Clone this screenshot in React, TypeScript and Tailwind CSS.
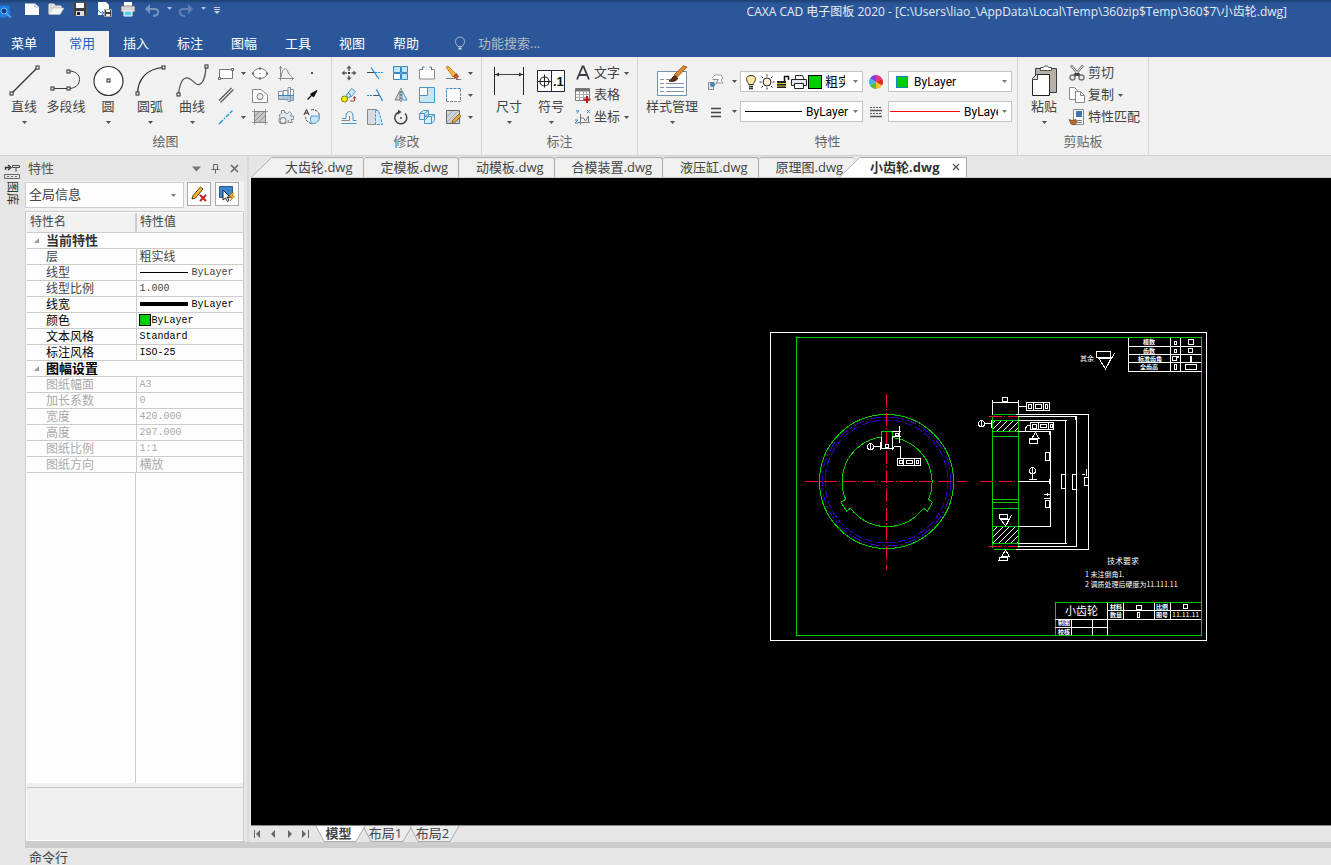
import { useState } from 'react';
import type { ReactNode } from 'react';
import clsx from 'clsx';

type IconProps = { w?: number; h?: number; children: ReactNode };

const Icon = ({ w = 16, h = 16, children }: IconProps) => (
    <svg width={w} height={h} viewBox={`0 0 ${w} ${h}`} fill="none" stroke="#4d4d4d" className="shrink-0 overflow-visible" aria-hidden="true">
        {children}
    </svg>
);

const Caret = ({ color = '#505050' }: { color?: string }) => (
    <svg width="5" height="3" viewBox="0 0 5 3" className="shrink-0" aria-hidden="true"><path d="M0 0h5L2.5 3z" fill={color} /></svg>
);

/* ---------- ribbon icons ---------- */

const Node = ({ x, y }: { x: number; y: number }) => <rect x={x - 1.5} y={y - 1.5} width="3" height="3" fill="#fff" stroke="#222" />;

const LineIcon = () => <Icon w={32} h={32}><path d="M3.5 28.5l26-26" stroke="#3c3c46" strokeWidth="1.4" /><Node x={3.5} y={28.5} /><Node x={29.5} y={2.5} /></Icon>;
const PolylineIcon = () => (
    <Icon w={32} h={32}>
        <path d="M2.5 23.5h16c7 0 11-4 11-9s-4-8.5-11-8.5" stroke="#3c3c46" />
        <Node x={2.5} y={23.5} /><Node x={18.5} y={23.5} /><Node x={18.5} y={6.5} />
    </Icon>
);
const CircleIcon = () => <Icon w={32} h={32}><circle cx="16.5" cy="16" r="14.5" fill="#fff" stroke="#333" strokeWidth="1.2" /><Node x={16.5} y={15.5} /></Icon>;
const ArcIcon = () => <Icon w={32} h={32}><path d="M3.5 28.5C4 14 13 3.5 29.5 2.5" stroke="#222" strokeWidth="1.2" /><Node x={3.5} y={28.5} /><Node x={29.5} y={2.5} /></Icon>;
const CurveIcon = () => <Icon w={32} h={32}><path d="M2.5 29.5C4 16 8 10 14 14c5 3 7 8 11 4.5 4-3.5 4.5-10 5-17" stroke="#55555c" strokeWidth="1.2" /><Node x={2.5} y={29.5} /><Node x={30.5} y={1.5} /></Icon>;

const RectIcon = () => <Icon><path d="M1.5 4.5h13v9h-13z" fill="#fff" stroke="#777" /><path d="M.5 12.5h2v2h-2zM13.5 3.5h2v2h-2z" fill="#fff" stroke="#666" /></Icon>;
const ParallelIcon = () => <Icon><path d="M1 13.5L13.5 1M2.5 15.5L15.5 2.5" stroke="#555" strokeWidth="1.2" /></Icon>;
const CenterLineIcon = () => <Icon><path d="M1 15l4-4m1-1l1-1m1-1l3-3m1-1l2.5-2.5" stroke="#1c9ad8" strokeWidth="1.4" /></Icon>;
const EllipseIcon = () => <Icon><ellipse cx="8" cy="8.5" rx="7" ry="5" fill="#fff" stroke="#777" /><path d="M7 2.5h2v2H7zM7 12.5h2v2H7zM0 7.5h2v2H0zM14 7.5h2v2h-2zM7.5 8h1v1h-1z" fill="#666" stroke="none" /></Icon>;
const RegionIcon = () => <Icon><path d="M.5 2.5H9l6.5 5.5v7.5H.5z" fill="#fff" stroke="#888" /><circle cx="8" cy="9.5" r="3" fill="#f1f1f1" stroke="#777" /></Icon>;
const HatchIcon = () => <Icon><path d="M2.5 2.5h11v11h-11z" fill="#c4c6c8" stroke="#777" /><path d="M0 2.5h16M0 13.5h16M2.5 0v16M13.5 0v16M3 7l4-4M3 12l9-9M7 13l6-6" stroke="#888" strokeWidth=".8" /></Icon>;
const FormulaIcon = () => <Icon><path d="M2.5 1v14.5M.5 13.5H15M1 3.5l1.5-2L4 3.5M13.5 12l2 1.5-2 2M3 12C4.5 3 8 2 9.5 6c1.2 3 3 5 4 5" stroke="#888" /></Icon>;
const ShaftIcon = () => (
    <Icon>
        <path d="M.5 4.5H5v8H.5zM5 3.5h5v9H5zM10 .5h2.5v14H10zM12.5 2.5h3v11h-3z" fill="#fff" stroke="#86929e" />
        <path d="M1 9h4v3H1zM5.5 8.5h4v3.5h-4zM10.5 8.5h1.5v5.5h-1.5zM13 8.5h2v4.5h-2z" fill="#a9cdea" stroke="none" /><path d="M0 8.5h16" stroke="#3c84c6" />
    </Icon>
);
const GearIcon = () => <Icon><path d="M3.5 1.5h3v2l3 1 2-2 2 2-1 2.5h3v3.5h-2.5l1.5 3h-4v-2L8 14.5H2l-1.5-3 1.5-3L1 6l2.5-1.5z" fill="#dfe7ef" stroke="#8a8f96" /><circle cx="5" cy="11.5" r="3" fill="#f1f1f1" stroke="#777" /></Icon>;
const PointIcon = () => <Icon><path d="M7 7h2v2H7z" fill="#555" stroke="none" /></Icon>;
const ArrowIcon = () => <Icon><path d="M3.5 12.5l5-5" stroke="#111" strokeWidth="1.3" /><path d="M13 3.5L6.5 7l3 3z" fill="#111" stroke="#111" /></Icon>;
const FillIcon = () => <Icon><path d="M7 .8a7 7 0 11-5.5 7" strokeDasharray="3 1" /><path d="M7 7h8.5c0 6-4 8-8 7.5-1-2-1.5-5-.5-7.5z" fill="#bfe3f7" stroke="#5b9cc8" /><path d="M0 6L2.5.5 5 6M1 4h3" stroke="#222" /></Icon>;

const MoveIcon = () => <Icon><path d="M8 3v3M8 10.5v3M3 8h3M10.5 8h3" stroke="#55585c" strokeWidth="1.4" /><path d="M5.5 3.5L8 .5l2.5 3zM5.5 12.5l2.5 3 2.5-3zM3.5 5.5l-3 2.5 3 2.5zM12.5 5.5l3 2.5-3 2.5z" fill="#55585c" stroke="none" /><rect x="7" y="7" width="2" height="2" fill="#333" stroke="none" /></Icon>;
const TrimIcon = () => <Icon><path d="M0 7.5h8" stroke="#444" /><path d="M8 7.5h8" stroke="#2b87d8" strokeDasharray="2 1" /><path d="M4 2.5l8 11.5" stroke="#2b87d8" strokeWidth="1.3" /></Icon>;
const ArrayIcon = () => <Icon><path d="M.5 1.5h7v6h-7zM8.5 1.5h6v6h-6zM8.5 8.5h6v6h-6z" fill="#bfe6fa" stroke="#3c87c0" /><path d="M.5 8.5h7v6h-7z" fill="#fff" stroke="#3c87c0" /></Icon>;
const StretchIcon = () => <Icon><path d="M.5 4.5h15v9.5H.5z" fill="#fff" stroke="#888" /><path d="M4 4.5h8" stroke="#f1f1f1" /><path d="M3.5 5v-3h2M12.5 5v-3h-2" stroke="#3878b8" /></Icon>;
const EraseIcon = () => <Icon><path d="M1 2l2-1 8 8-3 3z" fill="#f5b63c" stroke="#b8741a" strokeWidth=".8" /><path d="M8.5 11.5l3-3 2 3-2 2.5z" fill="#c35a3c" stroke="#8a3b26" strokeWidth=".8" /><path d="M1 13.5h9M11 14.5h5" stroke="#777" /></Icon>;
const CopyMoveIcon = () => (
    <Icon>
        <circle cx="3.5" cy="12" r="3" fill="#fff000" stroke="#7a7a00" /><path d="M6 7.5l4.5-6 4 3-4.5 5.5z" fill="#cfeafb" stroke="#4a96c8" /><circle cx="7.5" cy="8.5" r="2" fill="#cfeafb" stroke="#4a96c8" />
        <path d="M9 14h4.5v-4M12 11.5l1.5-2 1.5 2" stroke="#a33" />
    </Icon>
);
const ExtendIcon = () => <Icon><path d="M0 8.5h7" stroke="#2b87d8" strokeDasharray="2 1" /><path d="M7 8.5h5" /><path d="M9.5 2.5l6 11.5" stroke="#2b87d8" strokeWidth="1.3" /></Icon>;
const MirrorIcon = () => <Icon><path d="M7 3.5v9.5H2z" fill="#d3d6da" stroke="#777" /><path d="M9 3.5v9.5h5z" fill="#cfeafb" stroke="#4a96c8" /><path d="M8 1v14" stroke="#555" strokeDasharray="2 1" /></Icon>;
const ScaleIcon = () => <Icon><path d="M.5.5h15v15H.5z" fill="#c4e7fa" stroke="#4a96c8" /><path d="M.5.5h8v8h-8z" fill="#fff" stroke="#4a96c8" /></Icon>;
const ExplodeIcon = () => <Icon><path d="M1.5 1.5h13v13h-13z" fill="#fff" stroke="none" /><path d="M1.5 14.5v-13h14" stroke="#3c87c0" strokeDasharray="3 1" /><path d="M15.5 2v12.5h-14" stroke="#888" strokeDasharray="3 1" /></Icon>;
const OffsetIcon = () => <Icon><path d="M.5 14.5h15M1 9.5h4V7c0-6 7-6 7 0v4.5h3.5" stroke="#4a96c8" /><path d="M.5 11.5h8V7" stroke="#888" /></Icon>;
const ChamferIcon = () => <Icon><path d="M.5.5h9v15h-9z" fill="#d8dade" stroke="#888" /><path d="M8.5 1.5h3l4 14H8.5z" fill="#cfeafb" stroke="#4a96c8" strokeDasharray="3 1" /></Icon>;
const RotateIcon = () => <Icon><path d="M5 3.5A6 6 0 1012 4.5" stroke="#3f4248" strokeWidth="1.5" /><path d="M5 .5l3.5 2.5L5 5.5z" fill="#3f4248" stroke="none" /><circle cx="8" cy="9" r="1" fill="#3f4248" stroke="none" /></Icon>;
const BlockIcon = () => <Icon><path d="M.5 4.5l4-3h5v6l-3 3h-6zM5.5 7.5l3-2h7v6l-2.5 3h-7.5z" fill="#d5edfb" stroke="#4a96c8" /><path d="M.5 4.5h5v6M5.5 4.5l4-3M5.5 7.5h7v7M12.5 7.5l3-2" stroke="#4a96c8" /></Icon>;
const EditHatchIcon = () => <Icon><path d="M1.5 1.5h13v13h-13z" fill="#d0d3d6" stroke="#666" /><path d="M2 8l6-6M2 13l11-11M5 14L14 5M10 14l4-4" stroke="#999" strokeWidth=".7" /><path d="M8 11l6-6 2 2-6 6-3 1z" fill="#f0a636" stroke="#8a5a1a" strokeWidth=".8" /></Icon>;

const DimensionIcon = () => (
    <Icon w={32} h={32}>
        <path d="M1.5 2v28M30.5 2v28" stroke="#23243a" /><path d="M2 9.5h28" stroke="#444" /><path d="M2 9.5l4-2v4zM30 9.5l-4-2v4z" fill="#333" stroke="none" />
    </Icon>
);
const SymbolIcon = () => (
    <Icon w={32} h={32}>
        <path d="M2.5 5.5h27v21h-27z" fill="#fff" stroke="#23243a" /><path d="M16.5 5.5v21" stroke="#23243a" />
        <circle cx="9.5" cy="16.5" r="4.5" stroke="#222" strokeWidth="1.2" /><path d="M3 16.5h13M9.5 9.5v13" stroke="#222" />
        <text x="18" y="21" fontSize="13" fontWeight="700" fontFamily="Liberation Sans, sans-serif" fill="#111" stroke="none">.1</text>
    </Icon>
);
const TextIcon = () => <Icon><path d="M2 14.5L7.5 1.5h1L14 14.5M4 10h8" stroke="#3a3d42" strokeWidth="1.8" /></Icon>;
const TableIcon = () => <Icon><path d="M.5 1.5h14v12H.5z" fill="#fff" stroke="#777" /><path d="M.5 1.5h14v3H.5z" fill="#777" stroke="none" /><path d="M.5 7.5h14M.5 10.5h14M4.5 4v9.5M8.5 4v9.5M11.5 4v9.5" stroke="#aaa" /><path d="M12 9v7M8.5 12.5h7" stroke="#b41c1c" strokeWidth="2" /></Icon>;
const CoordIcon = () => <Icon><path d="M5.5 5v10.5M3 13.5h12M5.5 9h3l2 3 3-5M13.5 7v7" stroke="#777" /><path d="M1 1l1.5 2M4 1L2 4.5M12 1l3 3M15 1l-3 3M0 11h3l-3 3h3" stroke="#3c87c0" /></Icon>;
const StyleIcon = () => (
    <Icon w={32} h={32}>
        <path d="M1.5 6.5h29v24h-29z" fill="#fff" stroke="#6f93b0" />
        <path d="M4 14.5h4M4 18.5h4M4 22.5h4M4 26.5h4M10 14.5h5M10 18.5h18M10 22.5h18M10 26.5h18" stroke="#7b93ab" />
        <path d="M18 10L27.5.8 31 2 21.5 12z" fill="#dd8a35" stroke="#8d4c12" strokeWidth=".8" />
        <path d="M13 16c3-1 3-5 6-5l2.5 2c0 3-5 4-8.5 3z" fill="#5b2f17" stroke="#3f1f0e" />
    </Icon>
);
const LayerIcon = () => <Icon><path d="M4 4l3-3h6l2 3-2 2 2 3H7" fill="#fff" stroke="#999" /><path d="M.5 8.5h5v7h-5zM4.5 5.5h6l-3 5" fill="#dfe5ea" stroke="#888" /><circle cx="4.5" cy="10.5" r="2.5" fill="#4a86b8" stroke="none" /></Icon>;
const LineStyleIcon = () => <Icon><path d="M3 4.5h10M3 8.5h10M3 12.5h10" stroke="#44464c" strokeWidth="1.3" /></Icon>;
const LineWeightIcon = () => <Icon w={14}><path d="M1 3.5h12M1 9.5h12" stroke="#555" strokeDasharray="2 1" /><path d="M1 6.5h12M1 12.5h12" stroke="#555" strokeWidth="1.5" /></Icon>;
const ColorWheel = () => (
    <Icon w={14} h={14}>
        <g stroke="none">
            <path d="M7 7V0a7 7 0 016 3.500z" fill="#e8308c" /><path d="M7 7l6-3.500a7 7 0 010 7z" fill="#e8271c" /><path d="M7 7l6 3.500A7 7 0 017 14z" fill="#f0c020" />
            <path d="M7 7v7a7 7 0 01-6-3.500z" fill="#58b947" /><path d="M7 7l-6 3.500a7 7 0 010-7z" fill="#36b8e8" /><path d="M7 7L1 3.500A7 7 0 017 0z" fill="#6a4ae0" />
        </g>
    </Icon>
);
const BulbIcon = () => <Icon w={14}><path d="M7 1.5c-6 0-5 5-2.5 8v1h5v-1C12 6.5 13 1.5 7 1.5z" fill="#ffe9a0" stroke="#333" /><path d="M5 12.5h4M5 14.5h4" stroke="#333" strokeWidth="1.5" /></Icon>;
const SunIcon = () => <Icon><circle cx="8" cy="8" r="4" fill="#fff6d8" stroke="#222" /><path d="M8 .5v2M8 13.5v2M.5 8h2M13.5 8h2M2.5 2.5l1.5 1.5M12 12l1.5 1.5M2.5 13.5L4 12M12 4l1.5-1.5" stroke="#222" /></Icon>;
const LockIcon = () => <Icon w={14}><path d="M8.5 7V2.5h4V6" stroke="#111" strokeWidth="1.5" /><path d="M1 7h9v7H1z" fill="#222" stroke="none" /><path d="M1 9.5h9M1 12h9" stroke="#cfc832" /></Icon>;
const PlotIcon = () => <Icon><path d="M4.5 5V1.5h7L13 5" fill="#fff" stroke="#222" /><path d="M.5 5.5h15v6H.5z" fill="#e4e8ec" stroke="#222" /><path d="M3.5 9.5h9v5h-9z" fill="#fff" stroke="#222" /></Icon>;

const PasteIcon = () => (
    <Icon w={32} h={32}>
        <path d="M7.5 3.5h21v24h-21z" fill="#b9b1a8" stroke="#3a3a44" /><path d="M12.5 5.5v-3h3l1-1.5h3l1 1.5h3v3z" fill="#fff" stroke="#555" />
        <path d="M4.5 13.5l4-4h13v21h-17z" fill="#fff" stroke="#222" /><path d="M4.5 14.5h5v-5" fill="#ddd" stroke="#444" />
    </Icon>
);
const CutIcon = () => <Icon><path d="M2 .5l9 10.5M14 .5L5 11" stroke="#666" strokeWidth="2.5" /><path d="M2.5 1l8 9.5M13.5 1L5.5 10.5" stroke="#fff" /><circle cx="3.5" cy="12.5" r="2.5" stroke="#777" strokeWidth="1.5" /><circle cx="12.5" cy="12.5" r="2.5" stroke="#777" strokeWidth="1.5" /><path d="M5.5 8h5v3h-5z" fill="#444" stroke="none" /></Icon>;
const DuplicateIcon = () => <Icon><path d="M.5.5h5l3 3v9h-8z" fill="#fff" stroke="#888" /><path d="M6.5 4.5h5l4 4v7h-9z" fill="#fff" stroke="#888" /><path d="M11.5 4.5v4h4" stroke="#888" /></Icon>;
const MatchIcon = () => <Icon><path d="M4.5.5h10v15h-10z" fill="#fff" stroke="#888" /><path d="M7 2h6v6H7z" fill="#3f76b0" stroke="none" /><path d="M8 11.5h5M8 13.5h5" stroke="#777" /><path d="M0 10.5l3 1 4-1 1 3-3 2.5-3-1z" fill="#b4692a" stroke="#7a3f12" strokeWidth=".7" /></Icon>;

/* ---------- ribbon building blocks ---------- */

type Tool = { label: string; icon: ReactNode; menu?: boolean };

const BigButton = ({ label, icon, menu = true, wide }: Tool & { wide?: boolean }) => (
    <button className={clsx('flex flex-col items-center pt-2', wide ? 'w-14' : 'w-[42px]')}>
        {icon}
        <span className="h-5 text-[13px] leading-[18px] whitespace-nowrap">{label}</span>
        {menu && <span className="pt-1"><Caret /></span>}
    </button>
);

const SmallButton = ({ label, icon, menu }: Tool) => (
    <div className="flex items-center">
        <button aria-label={label} className="flex h-[22px] w-[26px] items-center justify-center">{icon}</button>
        {menu && <button aria-label={`${label} 选项`} className="flex h-[22px] w-2 items-center justify-center"><Caret /></button>}
    </div>
);

const LabelButton = ({ label, icon, menu }: Tool) => (
    <button className="flex h-[22px] items-center gap-[3px] text-[13px] leading-5">
        {icon}
        <span className="pr-px pb-[2px]">{label}</span>
        {menu && <Caret />}
    </button>
);

const Group = ({ title, children, className, inset }: { title: string; children: ReactNode; className?: string; inset?: string }) => (
    <section aria-label={title} className={clsx('flex flex-col border-r border-[#d4d4d4]', className)}>
        <div className={clsx('flex h-[74px] items-start', inset)}>{children}</div>
        <h2 className="text-center text-[13px] leading-5 text-[#666]">{title}</h2>
    </section>
);

const drawBig: Tool[] = [
    { label: '直线', icon: <LineIcon /> },
    { label: '多段线', icon: <PolylineIcon />, menu: false },
    { label: '圆', icon: <CircleIcon /> },
    { label: '圆弧', icon: <ArcIcon /> },
    { label: '曲线', icon: <CurveIcon /> },
];

const drawSmall: Tool[][] = [
    [{ label: '矩形', icon: <RectIcon />, menu: true }, { label: '椭圆', icon: <EllipseIcon /> }, { label: '公式曲线', icon: <FormulaIcon /> }, { label: '点', icon: <PointIcon /> }],
    [{ label: '平行线', icon: <ParallelIcon /> }, { label: '局部放大', icon: <RegionIcon /> }, { label: '孔轴', icon: <ShaftIcon /> }, { label: '箭头', icon: <ArrowIcon /> }],
    [{ label: '中心线', icon: <CenterLineIcon />, menu: true }, { label: '剖面线', icon: <HatchIcon /> }, { label: '齿轮', icon: <GearIcon /> }, { label: '填充', icon: <FillIcon /> }],
];

const modifySmall: Tool[][] = [
    [{ label: '平移', icon: <MoveIcon /> }, { label: '裁剪', icon: <TrimIcon /> }, { label: '阵列', icon: <ArrayIcon /> }, { label: '拉伸', icon: <StretchIcon /> }, { label: '删除', icon: <EraseIcon />, menu: true }],
    [{ label: '平移复制', icon: <CopyMoveIcon /> }, { label: '延伸', icon: <ExtendIcon /> }, { label: '镜像', icon: <MirrorIcon /> }, { label: '缩放', icon: <ScaleIcon /> }, { label: '分解', icon: <ExplodeIcon />, menu: true }],
    [{ label: '等距线', icon: <OffsetIcon /> }, { label: '过渡', icon: <ChamferIcon /> }, { label: '旋转', icon: <RotateIcon /> }, { label: '块', icon: <BlockIcon /> }, { label: '编辑填充', icon: <EditHatchIcon />, menu: true }],
];

const comboBox = "flex h-[21px] items-center border border-[#c3c3c3] bg-white pr-1 font-['Roboto','Noto_Sans_CJK_SC',sans-serif] text-xs text-black";
const comboSelect = 'min-w-0 appearance-none overflow-hidden bg-transparent outline-none';

const Ribbon = () => (
    <div className="flex h-[99px] shrink-0 border-b border-[#d2d2d2] bg-[#f1f1f1] text-[#444]">
        <Group title="绘图" className="w-[332px]" inset="pl-[3px]">
            {drawBig.map(t => <BigButton key={t.label} {...t} />)}
            <div className="flex flex-col pt-[5px]">
                {drawSmall.map(([first, ...rest]) => (
                    <div key={first.label} className="flex">
                        <div className="w-[34px]"><SmallButton {...first} /></div>
                        {rest.map(t => <SmallButton key={t.label} {...t} />)}
                    </div>
                ))}
            </div>
        </Group>
        <Group title="修改" className="w-[150px]" inset="pl-1">
            <div className="flex flex-col pt-[5px]">
                {modifySmall.map(row => (
                    <div key={row[0].label} className="flex">
                        {row.map(t => <SmallButton key={t.label} {...t} />)}
                    </div>
                ))}
            </div>
        </Group>
        <Group title="标注" className="w-[156px]" inset="pl-[6px]">
            <BigButton label="尺寸" icon={<DimensionIcon />} />
            <BigButton label="符号" icon={<SymbolIcon />} />
            <div className="flex flex-col items-start pt-[5px] pl-[3px]">
                <LabelButton label="文字" icon={<TextIcon />} menu />
                <LabelButton label="表格" icon={<TableIcon />} />
                <LabelButton label="坐标" icon={<CoordIcon />} menu />
            </div>
        </Group>
        <Group title="特性" className="w-[380px]" inset="pl-[6px]">
            <BigButton label="样式管理" icon={<StyleIcon />} wide />
            <div className="grid grid-cols-[40px_123px_25px_124px] gap-y-[9px] pt-[14px]">
                <button aria-label="图层" className="flex items-center justify-between pr-[3px] pl-2"><LayerIcon /><Caret /></button>
                <div className={clsx(comboBox, 'gap-px pl-[3px]')}>
                    <BulbIcon /><SunIcon /><LockIcon /><PlotIcon />
                    <span className="mr-[2px] size-[14px] shrink-0 border border-black bg-[#00cc00]" />
                    <select aria-label="当前图层" className={clsx(comboSelect, 'w-5 shrink-0 text-[13px]')}><option>粗实线</option></select>
                    <span className="ml-auto"><Caret color="#777" /></span>
                </div>
                <button aria-label="颜色" className="flex items-center justify-center"><ColorWheel /></button>
                <div className={clsx(comboBox, 'gap-[6px] pl-[7px]')}>
                    <span className="size-3 shrink-0 border border-[#1b82c8] bg-[#00cc00]" />
                    <select aria-label="当前颜色" className={clsx(comboSelect, 'flex-1')}><option>ByLayer</option></select>
                    <Caret color="#777" />
                </div>
                <button aria-label="线型" className="flex items-center justify-between pr-[3px] pl-2"><LineStyleIcon /><Caret /></button>
                <div className={clsx(comboBox, 'gap-1 pl-1')}>
                    <span className="h-px flex-1 bg-black" />
                    <select aria-label="当前线型" className={clsx(comboSelect, 'w-[43px] shrink-0')}><option>ByLayer</option></select>
                    <Caret color="#777" />
                </div>
                <button aria-label="线宽" className="flex items-center justify-center"><LineWeightIcon /></button>
                <div className={clsx(comboBox, 'gap-1 pl-px')}>
                    <span className="h-px flex-1 bg-[#ff0000]" />
                    <select aria-label="当前线宽" className={clsx(comboSelect, 'w-[34px] shrink-0')}><option>ByLayer</option></select>
                    <Caret color="#777" />
                </div>
            </div>
        </Group>
        <Group title="剪贴板" className="w-[131px]" inset="pl-[5px]">
            <BigButton label="粘贴" icon={<PasteIcon />} />
            <div className="flex flex-col items-start pt-[5px] pl-1">
                <LabelButton label="剪切" icon={<CutIcon />} />
                <LabelButton label="复制" icon={<DuplicateIcon />} menu />
                <LabelButton label="特性匹配" icon={<MatchIcon />} />
            </div>
        </Group>
    </div>
);

/* ---------- title bar ---------- */

const quickAccess: Tool[] = [
    { label: '新建', icon: <Icon><path d="M1 2.500h10l4 3.500v8H1z" fill="#fff" stroke="none" /><path d="M11 2.500v3.500h4" stroke="#a8b8d0" /></Icon> },
    { label: '打开', icon: <Icon><path d="M1 13V3h5l1.500 2H13v2" fill="#d8d8d4" stroke="#eee" /><path d="M1 13.500L5 7h11l-4 6.500z" fill="#f5f5f0" stroke="#c0c0bc" strokeWidth=".6" /></Icon> },
    { label: '保存', icon: <Icon><path d="M1.500 1.500h13v13h-13z" fill="#3a3d42" stroke="#555" /><path d="M4 2h8v5H4z" fill="#f4f4f4" stroke="none" /><path d="M4 10h8v5H4z" fill="#ddd" stroke="none" /><path d="M5 11h3v3H5z" fill="#222" stroke="none" /></Icon> },
    { label: '另存为', icon: <Icon><path d="M2 1h8l3 3v10H2z" fill="#fff" stroke="none" /><path d="M2 9l3 3h3M6 10l2 2-2 2" stroke="#2980c0" /><path d="M8.500 8.500h7v7h-7z" fill="#3a3d42" stroke="#aaa" /><path d="M10 9h4v2h-4zM10 13h4v2h-4z" fill="#eee" stroke="none" /></Icon> },
    { label: '打印', icon: <Icon><path d="M4 1h8v4H4z" fill="#fff" stroke="none" /><path d="M1 5h14v6H1z" fill="#d5d5d5" stroke="#555" strokeWidth=".6" /><path d="M4 10h8v5H4z" fill="#5ccbe8" stroke="#fff" /></Icon> },
];

const TitleBar = () => (
    <div className="flex h-6 items-center">
        <div className="w-5 shrink-0">
            <svg width="13" height="16" viewBox="0 0 13 16" aria-hidden="true">
                <path d="M0 2l4-1 3 1 3-1-1 4 2 3-2 3-4 3-5-1z" fill="#1f7be0" /><circle cx="4" cy="7" r="3" fill="#0d3b86" stroke="#7fc0ff" /><path d="M6.500 9.500l4.500 4" stroke="#4fa4f4" strokeWidth="2" />
            </svg>
        </div>
        {quickAccess.map(t => (
            <button key={t.label} aria-label={t.label} className="flex h-6 w-6 shrink-0 items-start justify-center pt-px">{t.icon}</button>
        ))}
        <button aria-label="撤销" className="flex w-6 justify-center pb-1"><Icon><path d="M4 7h7c5 0 4 7-2 7" stroke="#7792bf" strokeWidth="2" /><path d="M6 2v10L1 7z" fill="#7792bf" stroke="none" /></Icon></button>
        <button aria-label="撤销列表" className="flex w-[10px] justify-center pb-2"><Caret color="#b4c0d8" /></button>
        <button aria-label="重做" className="flex w-6 justify-center pb-1"><Icon><path d="M12 7H5c-5 0-4 7 2 7" stroke="#5f7fb4" strokeWidth="2" /><path d="M10 2v10l5-5z" fill="#5f7fb4" stroke="none" /></Icon></button>
        <button aria-label="重做列表" className="flex w-[10px] justify-center pb-2"><Caret color="#b4c0d8" /></button>
        <button aria-label="自定义快速访问" className="flex w-[18px] justify-center pb-1"><Icon w={6} h={8}><path d="M0 1.500h6M0 3.500h6" stroke="#c8d2e4" /><path d="M0 5h6L3 8z" fill="#c8d2e4" stroke="none" /></Icon></button>
        <h1 className="mr-11 ml-auto truncate text-xs leading-[22px] text-[#e6ecf5]">
            CAXA CAD 电子图板 2020 - [C:\Users\liao_\AppData\Local\Temp\360zip$Temp\360$7\小齿轮.dwg]
        </h1>
    </div>
);

const menuTabs = ['常用', '插入', '标注', '图幅', '工具', '视图', '帮助'];

const MenuBar = () => {
    const [active, setActive] = useState('常用');

    return (
        <nav className="mt-[7px] flex h-[26px] items-stretch text-[13px] leading-5 text-white">
            <button className="w-[55px] pr-[7px] pb-[2px]">菜单</button>
            {menuTabs.map(tab => (
                <button
                    key={tab}
                    onClick={() => setActive(tab)}
                    className={clsx('w-[54px] pb-[2px]', tab === active && 'bg-[#f1f1f1] text-[#1e62b4]')}
                >
                    {tab}
                </button>
            ))}
            <label className="flex items-center gap-3 pb-[2px] pl-[21px]">
                <Icon w={12} h={14}><path d="M4 10.500C2 8 1.500 7.500 1.500 5.500a4.500 4.500 0 019 0c0 2-.5 2.500-2.500 5z" stroke="#a9b7ce" /><path d="M4.500 12.500h3" stroke="#d0d8e4" strokeWidth="2" /></Icon>
                <input aria-label="功能搜索" placeholder="功能搜索..." className="w-40 bg-transparent outline-none placeholder:text-[#b3bac4]" />
            </label>
        </nav>
    );
};

/* ---------- property panel ---------- */

type Prop = { name: string; value: ReactNode; cjk?: boolean };

const currentProps: Prop[] = [
    { name: '层', value: '粗实线', cjk: true },
    { name: '线型', value: <><span className="mr-1 h-px w-12 bg-black" />ByLayer</> },
    { name: '线型比例', value: '1.000' },
];

const currentPropsBlack: Prop[] = [
    { name: '线宽', value: <><span className="mr-1 h-1 w-12 bg-black" />ByLayer</> },
    { name: '颜色', value: <><span className="-ml-px mr-px size-3 border border-black bg-[#00cc00]" />ByLayer</> },
    { name: '文本风格', value: 'Standard' },
    { name: '标注风格', value: 'ISO-25' },
];

const sheetProps: Prop[] = [
    { name: '图纸幅面', value: 'A3' },
    { name: '加长系数', value: '0' },
    { name: '宽度', value: '420.000' },
    { name: '高度', value: '297.000' },
    { name: '图纸比例', value: '1:1' },
    { name: '图纸方向', value: '横放', cjk: true },
];

const PropRows = ({ items, className }: { items: Prop[]; className?: string }) => (
    <>
        {items.map(p => (
            <tr key={p.name} className={clsx('h-4 border-b border-[#ccc]', className)}>
                <th scope="row" className="border-r border-[#ccc] p-0 pl-[19px] text-left text-xs leading-[15px] font-normal">{p.name}</th>
                <td className="p-0 pl-[3px]">
                    <div className={clsx('flex h-[15px] items-center', p.cjk ? 'text-xs leading-[15px]' : "font-['Liberation_Mono',monospace] text-[10px] leading-[15px]")}>
                        {p.value}
                    </div>
                </td>
            </tr>
        ))}
    </>
);

const SectionRow = ({ title, className }: { title: string; className?: string }) => (
    <tr className="h-4 border-b border-[#ccc]">
        <th colSpan={2} scope="colgroup" className="p-0 pl-[7px] text-left">
            <span className={clsx('flex items-center gap-[7px] text-[13px] leading-[15px] font-bold', className)}>
                <svg width="5" height="5" viewBox="0 0 5 5" aria-hidden="true"><path d="M5 0v5H0z" fill="#999" /></svg>
                {title}
            </span>
        </th>
    </tr>
);

const PropertyPanel = () => (
    <aside className="flex w-[219px] shrink-0 flex-col">
        <header className="flex h-[25px] items-center text-[#555]">
            <h2 className="pb-[2px] pl-[3px] text-[13px] leading-5">特性</h2>
            <div className="ml-auto flex items-center gap-[10px] pr-[5px]">
                <button aria-label="面板菜单"><Icon w={9} h={9}><path d="M0 2.500h9l-4.500 5z" fill="#777" stroke="none" /></Icon></button>
                <button aria-label="固定"><Icon w={9} h={9}><path d="M2.500 5.500v-5h4v5M.5 5.500h8M4.500 5.500v4" stroke="#666" /></Icon></button>
                <button aria-label="关闭"><Icon w={9} h={9}><path d="M1 1l7 7M8 1L1 8" stroke="#666" strokeWidth="1.600" /></Icon></button>
            </div>
        </header>
        <div className="flex h-[30px] bg-[#f1f1f1] pt-px">
            <div className="flex h-[26px] w-[159px] items-center border border-[#ccc] bg-[#fdfdfd] pr-[7px] pl-[3px] text-[#444]">
                <select aria-label="选择对象" className="flex-1 appearance-none bg-transparent pb-px text-[13px] outline-none"><option>全局信息</option></select>
                <Caret color="#777" />
            </div>
            <button aria-label="取消选择" className="mr-1 ml-[3px] flex size-6 items-center justify-center border border-[#aaa] bg-[#fdfdfd]">
                <Icon><path d="M1 13l1-3.500L9.500 1l2.500 2L4.500 12z" fill="#f6b436" stroke="#5a4212" /><path d="M9 9l6 6M15 9l-6 6" stroke="#c02020" strokeWidth="1.800" /></Icon>
            </button>
            <button aria-label="快速选择" className="flex size-6 items-center justify-center border border-[#aaa] bg-[#fdfdfd]">
                <Icon><path d="M.5.5h13v11H.5z" fill="#3d86cc" stroke="#27598c" /><path d="M4 4v10l2.500-2 2 3.500 1.500-1-2-3.500H11z" fill="#fff" stroke="#222" /><path d="M13 7l-3 4h3l-2 4 5-5h-3l2-3z" fill="#ffb31a" stroke="#c87a00" strokeWidth=".5" /></Icon>
            </button>
        </div>
        <div className="flex min-h-0 flex-1 flex-col border border-[#ccc] bg-[#fdfdfd] p-px pr-0">
            <table className="w-full table-fixed border-collapse">
                <colgroup><col className="w-[109px]" /><col /></colgroup>
                <thead>
                    <tr className="h-[19px] border-b border-[#ccc] bg-[#f1f1f1] text-left text-xs text-[#444]">
                        <th className="border-r-2 border-[#ccc] p-0 pl-[3px] font-normal">特性名</th>
                        <th className="p-0 pl-[3px] font-normal">特性值</th>
                    </tr>
                </thead>
                <tbody>
                    <SectionRow title="当前特性" className="text-[#333]" />
                    <PropRows items={currentProps} className="text-[#444]" />
                    <PropRows items={currentPropsBlack} className="text-black" />
                    <SectionRow title="图幅设置" className="text-black" />
                    <PropRows items={sheetProps} className="text-[#aaa]" />
                </tbody>
            </table>
            <div className="w-[109px] flex-1 border-r border-[#ccc]" />
            <div className="h-[57px] border-t-4 border-[#efefef] bg-[#efefef]"><div className="h-px bg-[#c4c4c4]" /></div>
        </div>
    </aside>
);

/* ---------- drawing ---------- */

// rectangles as [x, y, width, height], in sheet units
const valueBoxes = [
    [885, 444, 3, 3], [895, 433, 3, 2],
    [897, 458, 23, 7], [899, 460, 3, 3], [906, 460, 6, 3], [916, 460, 2, 3],
    [1002, 397, 5, 4],
    [1026, 402, 23, 8], [1028, 404, 3, 4], [1035, 404, 6, 4], [1045, 404, 2, 4],
    [1030, 422, 23, 7], [1032, 424, 4, 4], [1040, 424, 6, 3], [1050, 424, 2, 3],
    [1029, 439, 8, 4], [1045, 452, 4, 8], [1061, 474, 4, 14], [1072, 474, 4, 15], [1084, 477, 4, 8], [1045, 500, 4, 7],
    [999, 514, 8, 4], [999, 557, 8, 3], [1096, 351, 14, 6],
    [1174, 341, 2, 3], [1188, 339, 5, 5], [1174, 349, 2, 3], [1188, 348, 4, 4], [1172, 356, 4, 4], [1177, 356, 1, 1],
    [1190, 356, 1, 5], [1174, 364, 2, 5], [1185, 364, 11, 5],
    [1136, 605, 5, 4], [1137, 612, 2, 5], [1183, 604, 4, 4],
];

const sheetLabels = [
    { x: 1143, y: 344, text: '模数' },
    { x: 1143, y: 353, text: '齿数' },
    { x: 1138, y: 361, text: '标准齿角' },
    { x: 1140, y: 369, text: '全齿高' },
    { x: 1110, y: 609, text: '材料' },
    { x: 1110, y: 617, text: '数量' },
    { x: 1156, y: 609, text: '比例' },
    { x: 1156, y: 617, text: '图号' },
    { x: 1058, y: 625, text: '制图' },
    { x: 1058, y: 634, text: '校核' },
];

const Drawing = () => (
    <svg
        width="438"
        height="310"
        viewBox="770 332 438 310"
        fill="none"
        shapeRendering="crispEdges"
        role="img"
        aria-label="小齿轮零件图"
        className="absolute top-[154px] left-[519px] font-['Noto_Sans_CJK_SC',sans-serif]"
    >
        <defs>
            <pattern id="hatch" width="6" height="6" patternUnits="userSpaceOnUse"><path d="M-1 7l8-8M-1 1l2-2M5 7l2-2" stroke="#fff" /></pattern>
        </defs>
        <path d="M770.5 332.5h436v308h-436z" stroke="#fff" />
        <path d="M796.5 337.5h405v298h-405z" stroke="#00cc00" />

        {/* front view */}
        <circle cx="886.5" cy="481.5" r="67" stroke="#00cc00" />
        <circle cx="886.5" cy="481.5" r="64.5" stroke="#3300cc" strokeDasharray="10 3 2 3" />
        <circle cx="886.5" cy="481.5" r="61.5" stroke="#3300cc" strokeDasharray="8 3" />
        <path d="M881.5 431.5h11v6a45 45 0 0136.2 61.8l3.8 3.2-5 8.5-4.2-2.7a45 45 0 01-72.6 0l-4 2.7-5.7-8.7 4.7-3A45 45 0 01881.5 437z" stroke="#00cc00" />
        <path d="M805 481.5h162M886.5 394v176" stroke="#ff0033" strokeDasharray="13 2 1 3" />
        <g stroke="#fff">
            <circle cx="870.5" cy="446.5" r="3" />
            <path d="M870.5 444v5M874 446.5h7M880.5 442v8M881.5 437v12M892.5 437v13M881 448.5h13M899.5 426v17M892 431.5h9M892 436.5h9M893 447.5l2-1h5.5v12M903.5 458v7M914.5 458v7" />
        </g>

        {/* side view */}
        <path d="M993 421h25v10h-25zM993 527h25v16h-25z" fill="url(#hatch)" />
        <path d="M992.5 416v132M1018.5 416v132M994 414.5h23M994 549.5h23M992 420.5h27M992 431.5h27M992 436.5h27M992 499.5h27M992 502.5h27M992 508.5h27M992 526.5h27M992 543.5h27" stroke="#00cc00" />
        <path d="M989 416.5h30M989 546.5h30M980 481.5h38" stroke="#ff0033" strokeDasharray="13 2 1 3" />
        <g stroke="#fff">
            <path d="M992.5 400v15M1018.5 400v15M992 402.5h27M1018 406.5h8M1033.5 402v8M1043.5 402v8M1038.5 422v7M1048.5 422v7" />
            <circle cx="981.5" cy="423.5" r="3" /><path d="M981.5 420v7M985 423.5h6M991.5 420v8" />
            <path d="M1016 414.5h73M1018 416.5h59M1018 420.5h49M1018 431.5h33M1018 481.5h33M1018 526.5h33M1018 543.5h49M1018 546.5h59M1016 549.5h73" />
            <path d="M1088.5 414v136M1076.5 417v130M1065.5 420v124M1050.5 431v96M1049.5 432v3M1049.5 479v5M1075.5 417v3" />
            <path d="M1025.5 431v-3l2-2.5h3M1035.5 432l-3.5 6.5h7zM1029 438.5h8" />
            <circle cx="1032.5" cy="470.5" r="3" /><path d="M1032.5 467v12M1029 479.5h8" />
            <path d="M1082 474.5h3M1086.5 469v7M1044 494.5h6M1044 498.5h6M1047.5 493v3" />
            <path d="M1001 519.5h8.5l-4 6.5zM1005.5 526l6-11M1005.5 550l-4 6.5h8zM998 560.5h3M1099 358.5h12l-5.5 10.5zM1105.5 369l9-16" />
        </g>

        {/* tables */}
        <path d="M1055.5 635v-32.5h146" stroke="#00cc00" />
        <path d="M1128.5 338v33.5h73M1128 346.5h73M1128 354.5h73M1128 362.5h73M1170.5 338v33M1180.5 338v33" stroke="#fff" />
        <path d="M1055 619.5h146M1055 627.5h52M1107.5 603v32M1071.5 619v16M1092.5 619v16M1107 610.5h94M1123.5 603v16M1154.5 603v16M1170.5 603v16" stroke="#fff" />

        {valueBoxes.map(([x, y, w, h]) => <rect key={`${x}-${y}`} x={x + 0.5} y={y + 0.5} width={w} height={h} stroke="#fff" />)}

        <g fill="#fff" fontSize="7">
            <text x="1080" y="361">其余</text>
            <text x="1107" y="564" fontSize="8">技术要求</text>
            <text x="1085" y="577">1 未注倒角1.</text>
            <text x="1085" y="587">2 调质处理后硬度为11.111.11</text>
            <text x="1065" y="615" fontSize="11">小齿轮</text>
            <text x="1172" y="617">11.11.11</text>
        </g>
        <g fill="#fff" fontSize="6" fontWeight="700">
            {sheetLabels.map(l => <text key={l.text} x={l.x} y={l.y}>{l.text}</text>)}
        </g>
    </svg>
);

/* ---------- document area ---------- */

const files = ['大齿轮.dwg', '定模板.dwg', '动模板.dwg', '合模装置.dwg', '液压缸.dwg', '原理图.dwg'];

const DocumentTabs = () => (
    <div role="tablist" className="flex h-[22px] shrink-0 items-end border-b border-[#d0d0d0] text-[13px] leading-[19px] text-[#444]">
        {files.map((file, i) => (
            <button
                key={file}
                role="tab"
                aria-selected="false"
                className={clsx('relative h-5 shrink-0 pr-[10px]', i === 0 ? 'pl-[34px]' : 'rounded-tl-[3px] border-t border-[#aaa] bg-[#f0f0f0] pl-[17px]', i < 5 && 'rounded-tr-[3px] border-r border-[#aaa]')}
            >
                {i === 0 && (
                    <svg className="absolute inset-0 h-full w-full" aria-hidden="true">
                        <path d="M0 20L20 0h600v20z" fill="#f0f0f0" /><path d="M0 20.5L20.5.5H600" fill="none" stroke="#aaa" />
                    </svg>
                )}
                <span className="relative">{file}</span>
            </button>
        ))}
        <div className="relative -ml-[14px] flex h-5 shrink-0 items-center border-r border-[#aaa] pr-[6px] pl-[31px]">
            <svg className="absolute inset-0 h-full w-full" aria-hidden="true">
                <path d="M0 20L20 0h600v20z" fill="#fff" /><path d="M0 20.5L20.5.5H600" fill="none" stroke="#aaa" />
            </svg>
            <button role="tab" aria-selected="true" className="relative font-bold text-[#333]">小齿轮.dwg</button>
            <button aria-label="关闭" className="relative ml-3"><Icon w={8} h={8}><path d="M1 1l6 6M7 1L1 7" stroke="#555" strokeWidth="1.3" /></Icon></button>
        </div>
    </div>
);

const layouts = ['模型', '布局1', '布局2'];

const LayoutTabs = () => {
    const [active, setActive] = useState('模型');

    return (
        <div className="flex h-[17px] shrink-0 items-stretch border-t border-[#888] text-[13px] leading-[14px] text-[#444]">
            <div className="mr-[6px] flex items-center gap-2 pl-[2px]">
                <button aria-label="第一个"><Icon w={8} h={8}><path d="M1.5 0v8" stroke="#666" /><path d="M7 0v8L3 4z" fill="#666" stroke="none" /></Icon></button>
                <button aria-label="上一个"><Icon w={8} h={8}><path d="M6 0v8L2 4z" fill="#666" stroke="none" /></Icon></button>
                <button aria-label="下一个"><Icon w={8} h={8}><path d="M3 0v8l4-4z" fill="#666" stroke="none" /></Icon></button>
                <button aria-label="最后一个"><Icon w={8} h={8}><path d="M7.5 0v8" stroke="#666" /><path d="M1 0v8l4-4z" fill="#666" stroke="none" /></Icon></button>
            </div>
            {layouts.map(name => (
                <button key={name} onClick={() => setActive(name)} className={clsx('relative w-[47px] pb-[3px]', name === active && 'z-10 font-bold')}>
                    <svg width="54" height="16" viewBox="0 0 54 16" className="absolute top-0 -left-[2px]" aria-hidden="true">
                        <path d="M3 0l8 15.500h32L52 0" fill={name === active ? '#fff' : '#ececec'} stroke="#aaa" />
                    </svg>
                    <span className="relative">{name}</span>
                </button>
            ))}
        </div>
    );
};

const App = () => (
    <div className="flex h-screen flex-col overflow-hidden bg-[#e6e6e6] font-['Open_Sans','Noto_Sans_CJK_SC',sans-serif]">
        <header className="h-[57px] shrink-0 bg-[#2b579a] bg-[linear-gradient(#1d3f73,transparent_4px)]">
            <TitleBar />
            <MenuBar />
        </header>
        <Ribbon />
        <div className="flex min-h-0 flex-1">
            <div className="w-[25px] shrink-0 pt-[7px]">
                <button className="ml-1 flex w-4 flex-col items-center text-[#333]">
                    <Icon><path d="M1.5 7V4.500h4M4 2l3 2.500L4 7" stroke="#333" strokeWidth="1.3" /><path d="M8.500 2.500h7v2h-7zM12 4.500V9" /><path d="M.5 11.500h15v4H.5zM3 13.500h2M7 13.500h2M11 13.500h2" stroke="#666" /></Icon>
                    <span className="pt-[2px] text-xs leading-4 [text-orientation:sideways] [writing-mode:vertical-rl]">图库</span>
                </button>
            </div>
            <div className="flex min-w-0 flex-1 flex-col">
                <div className="flex min-h-0 flex-1">
                    <PropertyPanel />
                    <div className="mr-[2px] ml-[3px] w-[2px] shrink-0 bg-[#dadada]" />
                    <main className="flex min-w-0 flex-1 flex-col">
                        <DocumentTabs />
                        <div className="relative min-h-0 flex-1 overflow-hidden bg-black"><Drawing /></div>
                        <LayoutTabs />
                    </main>
                </div>
                <div className="h-[6px] shrink-0 bg-[#ccc]" />
                <div className="h-[17px] shrink-0 pl-1 text-[13px] leading-[19px] text-[#444]">命令行</div>
            </div>
        </div>
    </div>
);

export default App;
